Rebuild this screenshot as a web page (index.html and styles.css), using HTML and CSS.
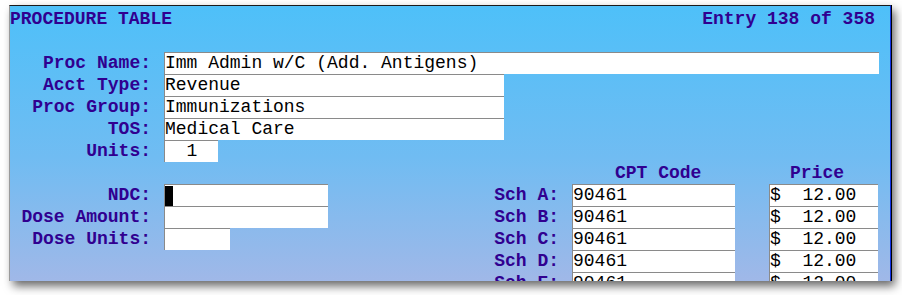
FILE: index.html
```html
<!DOCTYPE html>
<html lang="en">
<head>
    <title>Procedure Table</title>
    <link rel="stylesheet" href="styles.css">
</head>
<body>
    <div class="window">
        <div class="top">
            <span class="title">PROCEDURE TABLE</span>
            <span class="entry">Entry 138 of 358</span>
        </div>
        <div class="blank"></div>

        <div class="row">
            <span class="label">Proc Name:</span>
            <span class="field w-name">Imm Admin w/C (Add. Antigens)</span>
        </div>
        <div class="row">
            <span class="label">Acct Type:</span>
            <span class="field w-mid">Revenue</span>
        </div>
        <div class="row">
            <span class="label">Proc Group:</span>
            <span class="field w-mid">Immunizations</span>
        </div>
        <div class="row">
            <span class="label">TOS:</span>
            <span class="field w-mid">Medical Care</span>
        </div>
        <div class="row">
            <span class="label">Units:</span>
            <span class="field w-units">  1</span>
        </div>

        <div class="lower">
            <div class="left-col">
                <div class="blank"></div>
                <div class="row">
                    <span class="label">NDC:</span>
                    <span class="field w-ndc"><span class="cursor"></span></span>
                </div>
                <div class="row">
                    <span class="label">Dose Amount:</span>
                    <span class="field w-ndc"></span>
                </div>
                <div class="row">
                    <span class="label">Dose Units:</span>
                    <span class="field w-dose"></span>
                </div>
            </div>

            <div class="sched">
                <div class="row">
                    <span class="sch-label"></span>
                    <span class="head-cpt">CPT Code</span>
                    <span class="head-price">Price</span>
                </div>
                <div class="row">
                    <span class="sch-label">Sch A:</span>
                    <span class="field w-cpt">90461</span>
                    <span class="field w-price">$  12.00</span>
                </div>
                <div class="row">
                    <span class="sch-label">Sch B:</span>
                    <span class="field w-cpt">90461</span>
                    <span class="field w-price">$  12.00</span>
                </div>
                <div class="row">
                    <span class="sch-label">Sch C:</span>
                    <span class="field w-cpt">90461</span>
                    <span class="field w-price">$  12.00</span>
                </div>
                <div class="row">
                    <span class="sch-label">Sch D:</span>
                    <span class="field w-cpt">90461</span>
                    <span class="field w-price">$  12.00</span>
                </div>
                <div class="row">
                    <span class="sch-label">Sch E:</span>
                    <span class="field w-cpt">90461</span>
                    <span class="field w-price">$  12.00</span>
                </div>
            </div>
        </div>
    </div>
</body>
</html>
```

FILE: styles.css
```css
body {
    margin: 0;
    min-height: 295px;
    background: #ffffff;
    font-family: "Liberation Mono", "DejaVu Sans Mono", monospace;
    font-size: 18px;
    line-height: 22px;
}

.window {
    margin: 5px 0 14px 9px;
    width: 880px;
    height: 273px;
    padding-top: 2px;
    border-top: 1px solid #1a1a1a;
    border-left: 1px solid #9a9a9a;
    border-right: 1px solid #1030e0;
    box-shadow: 1px 0 0 #000000, 4px 5px 9px rgba(0, 0, 0, 0.6);
    background: linear-gradient(to bottom, #4ec0f9, #70bcf2 55%, #a0b8e8);
    overflow: hidden;
    color: #300090;
    font-weight: bold;
}

.top {
    display: flex;
    justify-content: space-between;
    height: 22px;
    padding-right: 15px;
}

.blank {
    height: 22px;
}

.row {
    display: flex;
    height: 22px;
}

.label {
    flex: none;
    width: 141px;
    padding-right: 13px;
    text-align: right;
    white-space: pre;
}

.field {
    flex: none;
    box-sizing: border-box;
    height: 22px;
    line-height: 21px;
    border-top: 1px solid #8a8a8a;
    border-left: 1px solid #8a8a8a;
    background: #ffffff;
    color: #000000;
    font-weight: normal;
    white-space: pre;
    overflow: hidden;
}

.w-name { width: 715px; }
.w-mid { width: 340px; }
.w-units { width: 54px; }
.w-ndc { width: 164px; }
.w-dose { width: 66px; }
.w-cpt { width: 163px; margin-right: 34px; }
.w-price { width: 109px; }

.cursor {
    display: block;
    width: 8px;
    height: 20px;
    margin-top: 1px;
    background: #000000;
}

.lower {
    display: flex;
}

.left-col {
    width: 400px;
}

.sch-label {
    flex: none;
    width: 149px;
    padding-right: 13px;
    text-align: right;
}

.head-cpt {
    flex: none;
    box-sizing: border-box;
    width: 197px;
    padding-left: 43px;
}

.head-price {
    padding-left: 21px;
}
```
